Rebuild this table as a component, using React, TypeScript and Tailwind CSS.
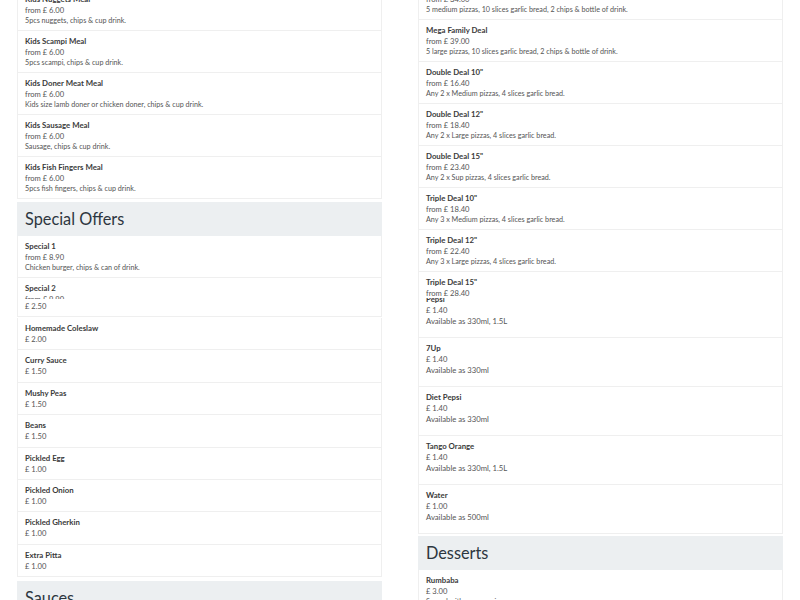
import React from 'react';

type Item = { name: string; price: string; desc?: string };

const kids: Item[] = [
  { name: 'Kids Nuggets Meal', price: 'from £ 6.00', desc: '5pcs nuggets, chips & cup drink.' },
  { name: 'Kids Scampi Meal', price: 'from £ 6.00', desc: '5pcs scampi, chips & cup drink.' },
  { name: 'Kids Doner Meat Meal', price: 'from £ 6.00', desc: 'Kids size lamb doner or chicken doner, chips & cup drink.' },
  { name: 'Kids Sausage Meal', price: 'from £ 6.00', desc: 'Sausage, chips & cup drink.' },
  { name: 'Kids Fish Fingers Meal', price: 'from £ 6.00', desc: '5pcs fish fingers, chips & cup drink.' },
];

const sides: Item[] = [
  { name: 'Homemade Coleslaw', price: '£ 2.00' },
  { name: 'Curry Sauce', price: '£ 1.50' },
  { name: 'Mushy Peas', price: '£ 1.50' },
  { name: 'Beans', price: '£ 1.50' },
  { name: 'Pickled Egg', price: '£ 1.00' },
  { name: 'Pickled Onion', price: '£ 1.00' },
  { name: 'Pickled Gherkin', price: '£ 1.00' },
  { name: 'Extra Pitta', price: '£ 1.00' },
];

const deals: Item[] = [
  { name: 'Family Deal', price: 'from £ 34.00', desc: '5 medium pizzas, 10 slices garlic bread, 2 chips & bottle of drink.' },
  { name: 'Mega Family Deal', price: 'from £ 39.00', desc: '5 large pizzas, 10 slices garlic bread, 2 chips & bottle of drink.' },
  { name: 'Double Deal 10"', price: 'from £ 16.40', desc: 'Any 2 x Medium pizzas, 4 slices garlic bread.' },
  { name: 'Double Deal 12"', price: 'from £ 18.40', desc: 'Any 2 x Large pizzas, 4 slices garlic bread.' },
  { name: 'Double Deal 15"', price: 'from £ 23.40', desc: 'Any 2 x Sup pizzas, 4 slices garlic bread.' },
  { name: 'Triple Deal 10"', price: 'from £ 18.40', desc: 'Any 3 x Medium pizzas, 4 slices garlic bread.' },
  { name: 'Triple Deal 12"', price: 'from £ 22.40', desc: 'Any 3 x Large pizzas, 4 slices garlic bread.' },
];

const drinks: Item[] = [
  { name: '7Up', price: '£ 1.40', desc: 'Available as 330ml' },
  { name: 'Diet Pepsi', price: '£ 1.40', desc: 'Available as 330ml' },
  { name: 'Tango Orange', price: '£ 1.40', desc: 'Available as 330ml, 1.5L' },
  { name: 'Water', price: '£ 1.00', desc: 'Available as 500ml' },
];

function MenuItem({ item }: { item: Item }) {
  return (
    <div className="bg-white border-x border-b border-[#efefef] pl-[7px] pr-2 pt-[5px] pb-[4px]">
      <div className="text-[7.8px] leading-[11px] font-bold text-[#3a3a3a]">{item.name}</div>
      <div className="text-[7.6px] leading-[11px] text-[#555]">{item.price}</div>
      {item.desc && <div className="text-[7.2px] leading-[10px] text-[#555]">{item.desc}</div>}
    </div>
  );
}

function SideItem({ item }: { item: Item }) {
  return (
    <div className="bg-white border-x border-b border-[#efefef] pl-[7px] pr-2 pt-[5px] pb-[4.4px]">
      <div className="text-[7.8px] leading-[11px] font-bold text-[#3a3a3a]">{item.name}</div>
      <div className="text-[7.6px] leading-[11px] text-[#555]">{item.price}</div>
    </div>
  );
}

function DrinkItem({ item }: { item: Item }) {
  return (
    <div className="bg-white border-x border-b border-[#efefef] pl-[7px] pr-2 pt-[5px] pb-[10px]">
      <div className="text-[7.8px] leading-[11px] font-bold text-[#3a3a3a]">{item.name}</div>
      <div className="text-[7.6px] leading-[11px] text-[#555]">{item.price}</div>
      <div className="text-[7.7px] leading-[11px] text-[#555]">{item.desc}</div>
    </div>
  );
}

function SectionHeader({ title }: { title: string }) {
  return (
    <div className="bg-[#eceff1] h-[34px] px-2 flex items-center">
      <h2 className="text-[16.3px] text-[#2d3640] font-normal">{title}</h2>
    </div>
  );
}

export default function App() {
  return (
    <div
      className="h-[600px] w-[800px] overflow-hidden bg-white"
      style={{ fontFamily: 'Lato, "Open Sans", sans-serif' }}
    >
      <div className="grid grid-cols-2 gap-[36px] px-[17px]">
        {/* left column */}
        <div className="-mt-[11px]">
          {kids.map((it) => (
            <MenuItem key={it.name} item={it} />
          ))}
          <div className="mt-[3px]">
            <SectionHeader title="Special Offers" />
          </div>
          <MenuItem item={{ name: 'Special 1', price: 'from £ 8.90', desc: 'Chicken burger, chips & can of drink.' }} />
          <div className="h-[21px] overflow-hidden">
            <MenuItem item={{ name: 'Special 2', price: 'from £ 9.90', desc: 'Doner kebab, chips & can of drink.' }} />
          </div>
          <div className="h-[19px] overflow-hidden">
            <div className="-mt-[14.5px]">
              <SideItem item={{ name: 'Chips', price: '£ 2.50' }} />
            </div>
          </div>
          {sides.map((it) => (
            <SideItem key={it.name} item={it} />
          ))}
          <div className="mt-[4px]">
            <SectionHeader title="Sauces" />
          </div>
        </div>

        {/* right column */}
        <div className="-mt-[22px]">
          {deals.map((it) => (
            <MenuItem key={it.name} item={it} />
          ))}
          <div className="h-[26px] overflow-hidden">
            <MenuItem item={{ name: 'Triple Deal 15"', price: 'from £ 28.40', desc: 'Any 3 x Sup pizzas, 4 slices garlic bread.' }} />
          </div>
          <div className="h-[39.5px] overflow-hidden">
            <div className="-mt-[9.5px]">
              <DrinkItem item={{ name: 'Pepsi', price: '£ 1.40', desc: 'Available as 330ml, 1.5L' }} />
            </div>
          </div>
          {drinks.map((it) => (
            <DrinkItem key={it.name} item={it} />
          ))}
          <div className="mt-[2.5px]">
            <SectionHeader title="Desserts" />
          </div>
          <MenuItem item={{ name: 'Rumbaba', price: '£ 3.00', desc: 'Served with cream or ice cream.' }} />
        </div>
      </div>
    </div>
  );
}
